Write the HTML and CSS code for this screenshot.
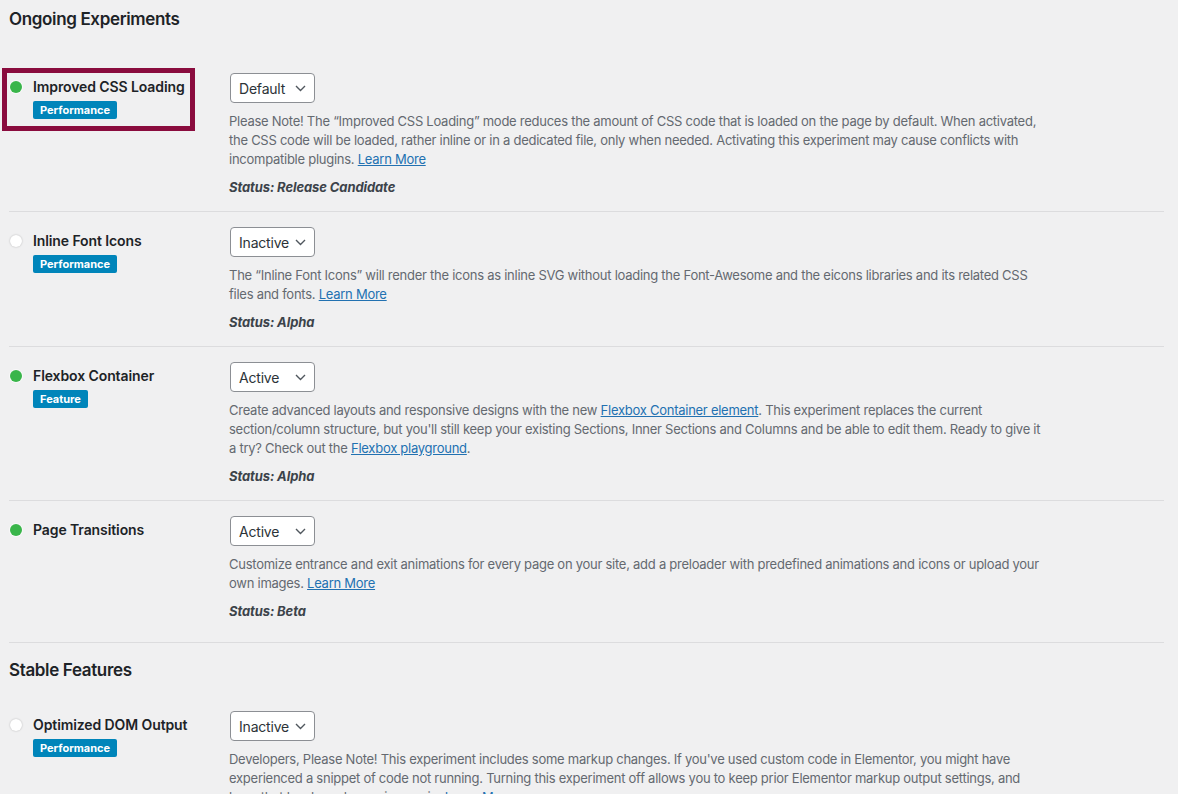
FILE: index.html
```html
<!DOCTYPE html>
<html>
<head>
<meta charset="utf-8">
<link rel="stylesheet" href="styles.css">
</head>
<body>
<div class="page">
  <h2 class="section-title first">Ongoing Experiments</h2>

  <div class="row">
    <div class="head">
      <span class="dot on"></span>
      <div class="head-text">
        <div class="title">Improved CSS Loading</div>
        <span class="badge">Performance</span>
      </div>
      <div class="highlight"></div>
    </div>
    <div class="body">
      <div class="select"><span>Default</span><svg class="chev" width="11" height="7" viewBox="0 0 11 7"><path d="M1 1l4.5 4.5L10 1" fill="none" stroke="#50575e" stroke-width="1.4"/></svg></div>
      <p class="desc">Please Note! The “Improved CSS Loading” mode reduces the amount of CSS code that is loaded on the page by default. When activated,<br>the CSS code will be loaded, rather inline or in a dedicated file, only when needed. Activating this experiment may cause conflicts with<br>incompatible plugins. <a href="#">Learn More</a></p>
      <p class="status">Status: Release Candidate</p>
    </div>
  </div>

  <div class="row">
    <div class="head">
      <span class="dot off"></span>
      <div class="head-text">
        <div class="title">Inline Font Icons</div>
        <span class="badge">Performance</span>
      </div>
    </div>
    <div class="body">
      <div class="select"><span>Inactive</span><svg class="chev" width="11" height="7" viewBox="0 0 11 7"><path d="M1 1l4.5 4.5L10 1" fill="none" stroke="#50575e" stroke-width="1.4"/></svg></div>
      <p class="desc">The “Inline Font Icons” will render the icons as inline SVG without loading the Font-Awesome and the eicons libraries and its related CSS<br>files and fonts. <a href="#">Learn More</a></p>
      <p class="status">Status: Alpha</p>
    </div>
  </div>

  <div class="row">
    <div class="head">
      <span class="dot on"></span>
      <div class="head-text">
        <div class="title">Flexbox Container</div>
        <span class="badge">Feature</span>
      </div>
    </div>
    <div class="body">
      <div class="select"><span>Active</span><svg class="chev" width="11" height="7" viewBox="0 0 11 7"><path d="M1 1l4.5 4.5L10 1" fill="none" stroke="#50575e" stroke-width="1.4"/></svg></div>
      <p class="desc">Create advanced layouts and responsive designs with the new <a href="#">Flexbox Container element</a>. This experiment replaces the current<br>section/column structure, but you'll still keep your existing Sections, Inner Sections and Columns and be able to edit them. Ready to give it<br>a try? Check out the <a href="#">Flexbox playground</a>.</p>
      <p class="status">Status: Alpha</p>
    </div>
  </div>

  <div class="row last">
    <div class="head">
      <span class="dot on"></span>
      <div class="head-text">
        <div class="title">Page Transitions</div>
      </div>
    </div>
    <div class="body">
      <div class="select"><span>Active</span><svg class="chev" width="11" height="7" viewBox="0 0 11 7"><path d="M1 1l4.5 4.5L10 1" fill="none" stroke="#50575e" stroke-width="1.4"/></svg></div>
      <p class="desc">Customize entrance and exit animations for every page on your site, add a preloader with predefined animations and icons or upload your<br>own images. <a href="#">Learn More</a></p>
      <p class="status">Status: Beta</p>
    </div>
  </div>

  <h2 class="section-title second">Stable Features</h2>

  <div class="row">
    <div class="head">
      <span class="dot off"></span>
      <div class="head-text">
        <div class="title">Optimized DOM Output</div>
        <span class="badge">Performance</span>
      </div>
    </div>
    <div class="body">
      <div class="select"><span>Inactive</span><svg class="chev" width="11" height="7" viewBox="0 0 11 7"><path d="M1 1l4.5 4.5L10 1" fill="none" stroke="#50575e" stroke-width="1.4"/></svg></div>
      <p class="desc">Developers, Please Note! This experiment includes some markup changes. If you've used custom code in Elementor, you might have<br>experienced a snippet of code not running. Turning this experiment off allows you to keep prior Elementor markup output settings, and<br>have that lovely code running again. <a href="#">Learn More</a></p>
      <p class="status">Status: Stable</p>
    </div>
  </div>
</div>
</body>
</html>
```

FILE: styles.css
```css
html, body {
  margin: 0;
  padding: 0;
  background: #f0f0f1;
}
body {
  font-family: Inter, "Noto Sans", "Liberation Sans", sans-serif;
  color: #1d2327;
  overflow: hidden;
}
.page {
  padding: 0 14px 0 9px;
}
.section-title {
  font-size: 17px;
  line-height: 22px;
  font-weight: 600;
  letter-spacing: -0.35px;
  margin: 0;
  color: #1d2327;
}
.section-title.first {
  padding-top: 8px;
  margin-bottom: 28px;
}
.section-title.second {
  margin-top: 16px;
  margin-bottom: 15px;
}
.row {
  display: flex;
  padding: 15px 0 14px;
  border-bottom: 1px solid #dcdcde;
}
.row.last {
  padding-bottom: 21px;
}
.head {
  position: relative;
  width: 220px;
  flex: none;
  display: flex;
  align-items: flex-start;
  gap: 11px;
  padding-top: 4px;
}
.dot {
  width: 12px;
  height: 12px;
  border-radius: 50%;
  margin-left: 1px;
  margin-top: 4px;
  flex: none;
}
.dot.on {
  background: #39b54a;
  box-shadow: 0 0 0 1px rgba(255,255,255,0.6);
}
.dot.off {
  background: #fff;
  box-shadow: 0 0 2px rgba(0,0,0,0.25);
}
.title {
  font-size: 14px;
  line-height: 20px;
  font-weight: 600;
  letter-spacing: -0.1px;
  color: #1d2327;
}
.badge {
  display: inline-block;
  margin-top: 4px;
  background: #0085ba;
  color: #fff;
  font-size: 11px;
  font-weight: 700;
  line-height: 18px;
  padding: 0 7px;
  border-radius: 2px;
}
.highlight {
  position: absolute;
  left: -7px;
  top: -5px;
  width: 183px;
  height: 53px;
  border: 5px solid #8a0c3e;
}
.body {
  flex: 1;
}
.select {
  box-sizing: border-box;
  width: 85px;
  height: 30px;
  margin-left: 1px;
  background: #fff;
  border: 1px solid #8c8f94;
  border-radius: 4px;
  display: flex;
  align-items: center;
  justify-content: space-between;
  padding: 0 8px 0 8px;
  font-size: 14px;
  letter-spacing: -0.2px;
  color: #2c3338;
}
.chev {
  display: block;
  flex: none;
}
.desc {
  margin: 9px 0 0;
  font-size: 13px;
  line-height: 19px;
  letter-spacing: -0.26px;
  color: #646970;
  white-space: nowrap;
}
.desc a {
  color: #2271b1;
  text-decoration: underline;
}
.status {
  margin: 9px 0 0;
  font-size: 13px;
  line-height: 19px;
  font-weight: 700;
  font-style: italic;
  letter-spacing: -0.1px;
  color: #3c434a;
}
```
